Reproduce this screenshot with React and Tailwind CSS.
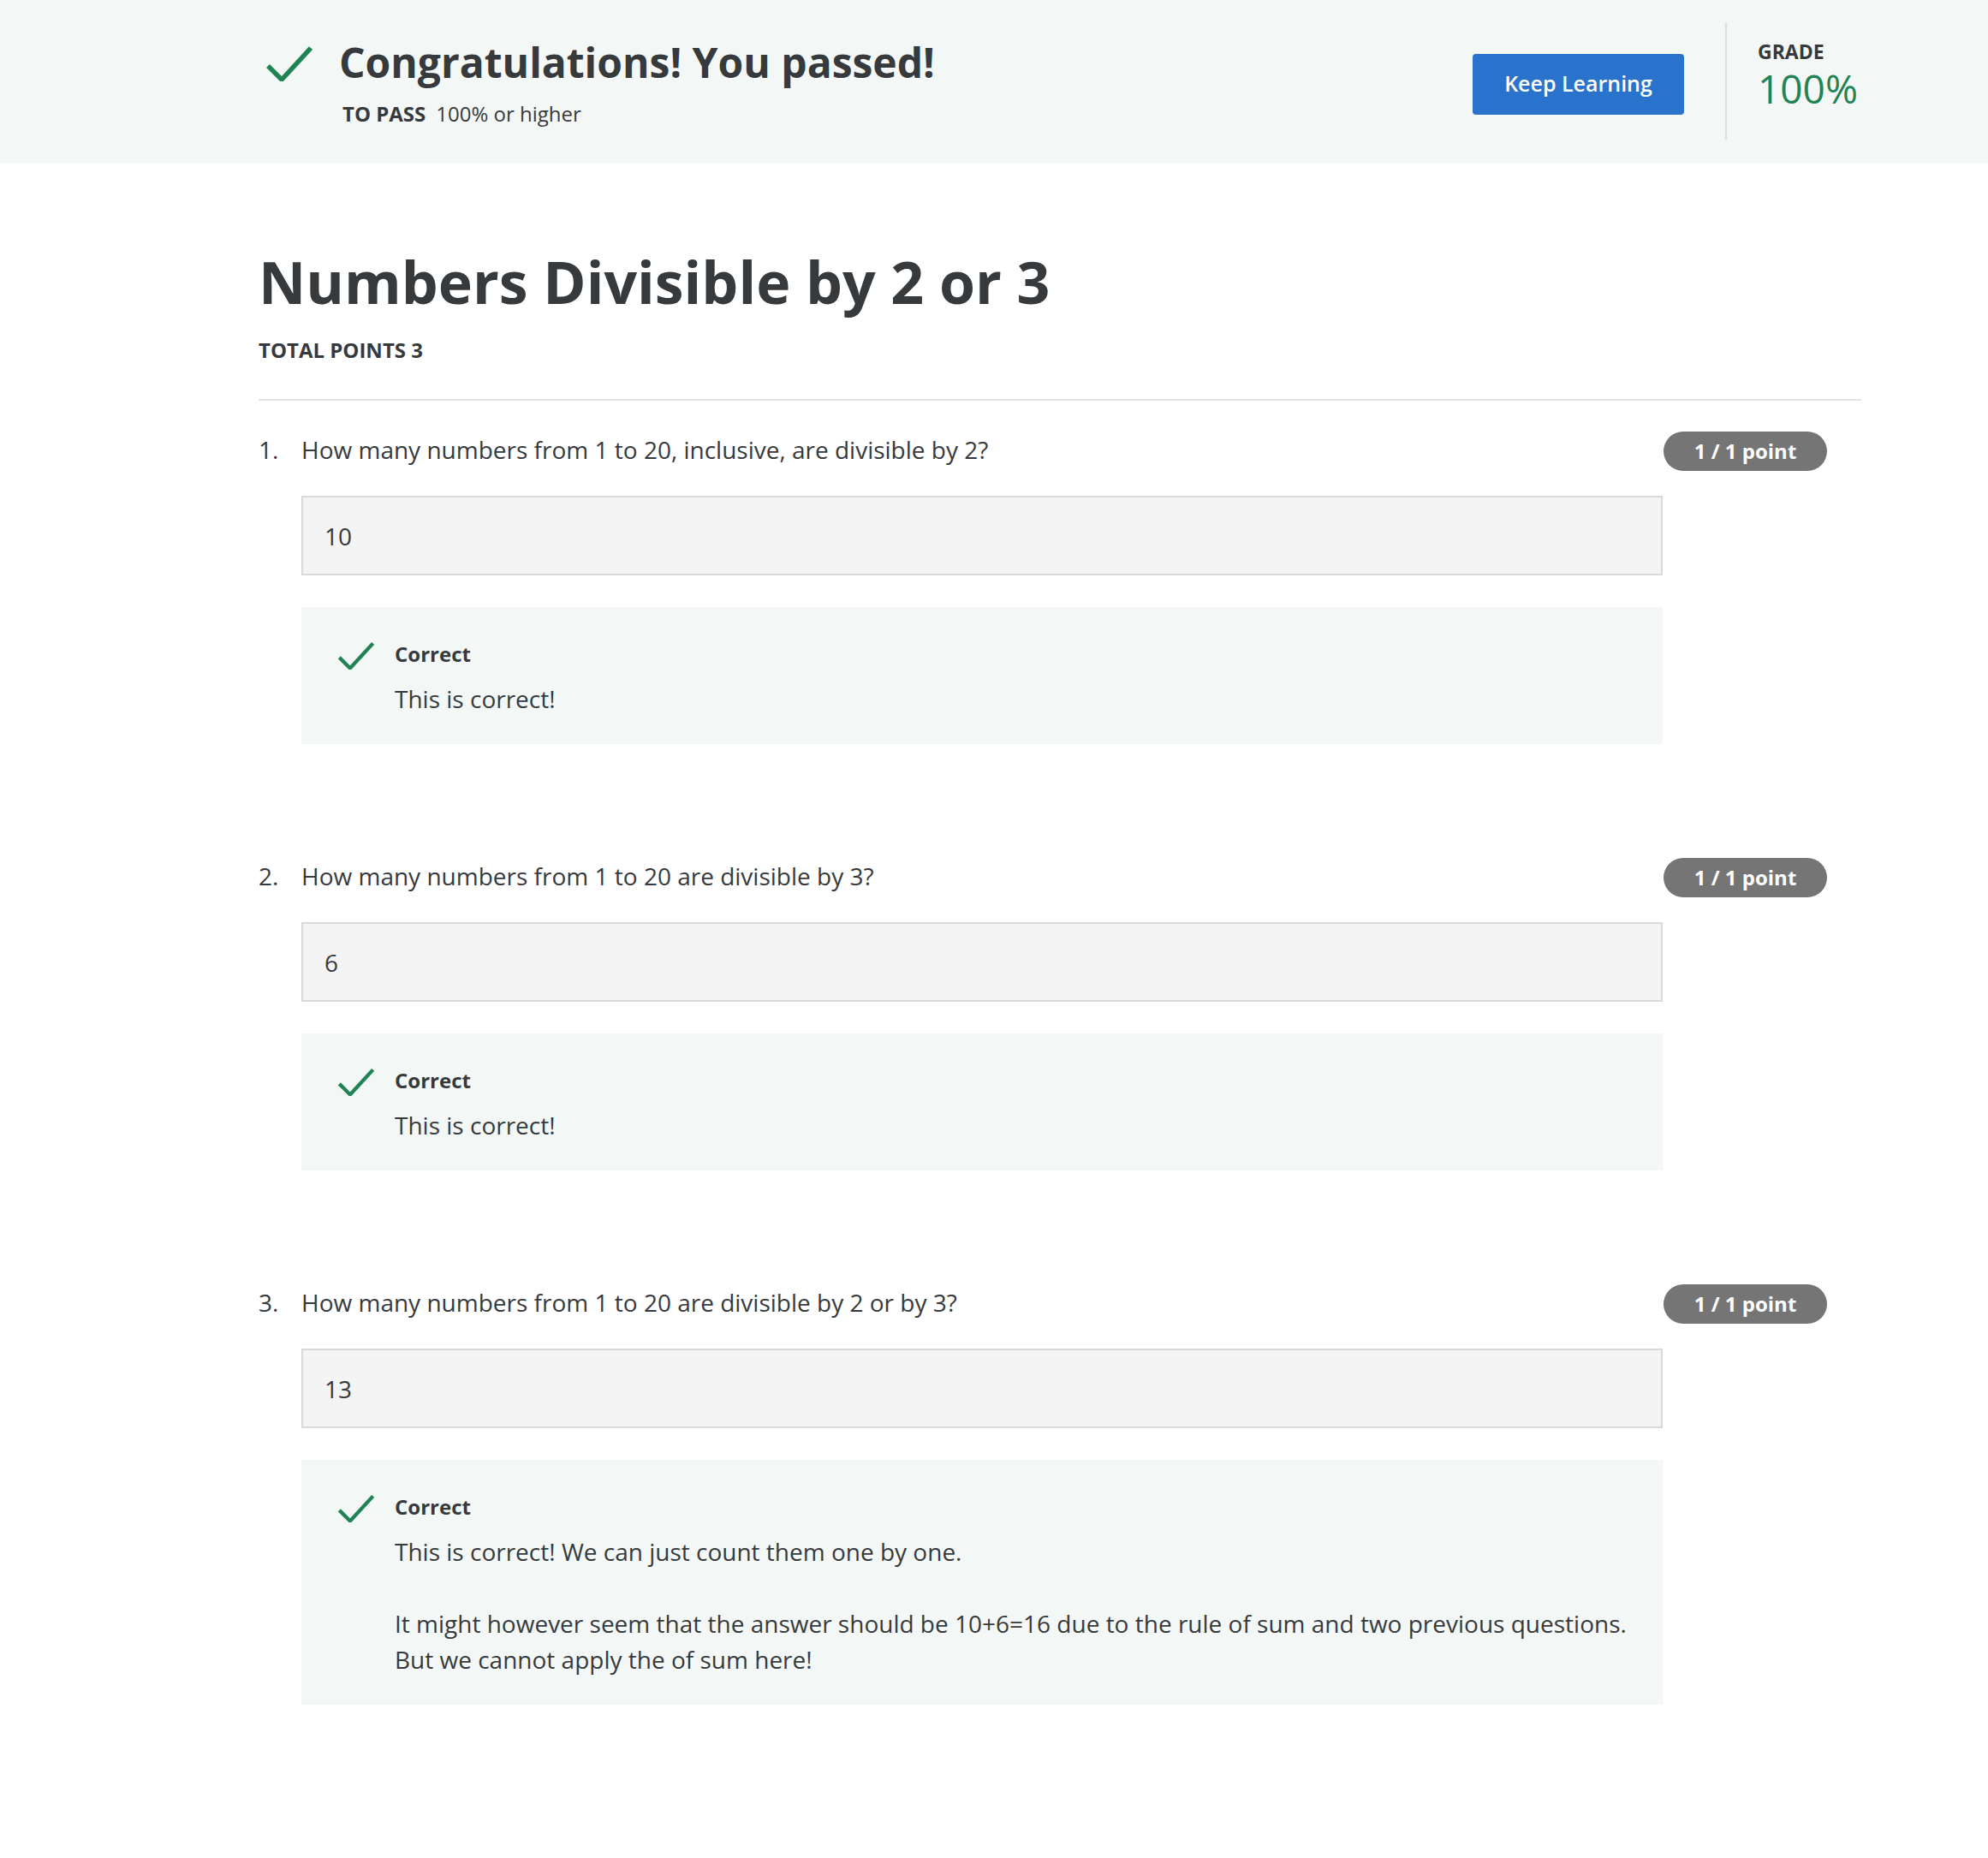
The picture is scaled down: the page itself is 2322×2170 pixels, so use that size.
import React from 'react';

const questions = [
  {
    id: 1,
    text: 'How many numbers from 1 to 20, inclusive, are divisible by 2?',
    answer: '10',
    feedback: ['This is correct!'],
  },
  {
    id: 2,
    text: 'How many numbers from 1 to 20 are divisible by 3?',
    answer: '6',
    feedback: ['This is correct!'],
  },
  {
    id: 3,
    text: 'How many numbers from 1 to 20 are divisible by 2 or by 3?',
    answer: '13',
    feedback: [
      'This is correct! We can just count them one by one.',
      '',
      'It might however seem that the answer should be 10+6=16 due to the rule of sum and two previous questions.',
      'But we cannot apply the of sum here!',
    ],
  },
];

const Check = ({ className, strokeWidth = 5 }) => (
  <svg viewBox="0 0 54 42" className={className} fill="none">
    <polyline
      points="2,24 18,40 52,3"
      stroke="#1f8354"
      strokeWidth={strokeWidth}
      strokeLinecap="butt"
      strokeLinejoin="miter"
    />
  </svg>
);

const Question = ({ q }) => (
  <div className="mb-[133px]">
    {/* Prompt row */}
    <div className="flex items-start justify-between">
      <div className="flex text-[28px] leading-[42px]">
        <span className="w-[50px]">{q.id}.</span>
        <p>{q.text}</p>
      </div>
      <span className="mr-[40px] flex h-[46px] w-[191px] items-center justify-center rounded-full bg-[#757575] text-[24px] font-bold text-white">
        1 / 1 point
      </span>
    </div>

    {/* Answer */}
    <div className="ml-[50px] mt-[29px] flex h-[93px] w-[1590px] items-center border-2 border-[#d9d9d9] bg-[#f4f4f4] px-[25px] text-[28px]">
      {q.answer}
    </div>

    {/* Feedback */}
    <div className="ml-[50px] mt-[37px] flex w-[1590px] bg-[#f3f8f6] pb-[32px] pl-[42px] pt-[37px]">
      <Check className="mt-[3px] h-[33px] w-[44px] shrink-0" strokeWidth={5.5} />
      <div className="ml-[23px]">
        <div className="text-[24px] font-bold leading-[36px]">Correct</div>
        <div className="mt-[13px] text-[28px] leading-[42px]">
          {q.feedback.map((line, i) => (
            <div key={i} className="h-[42px] whitespace-nowrap">{line}</div>
          ))}
        </div>
      </div>
    </div>
  </div>
);

export default function App() {
  return (
    <div className="min-h-screen bg-white text-[#373a3c]" style={{ fontFamily: '"Open Sans", "Liberation Sans", sans-serif' }}>
      {/* Header */}
      <header className="bg-[#f3f8f6]">
        <div className="ml-[302px] flex h-[190px] w-[1872px] items-center justify-between">
          <div className="flex items-start pt-[4px]">
            <Check className="ml-[9px] mt-[8px] h-[42px] w-[54px]" strokeWidth={5.5} />
            <div className="ml-[31px]">
              <h2 className="text-[48px] font-bold leading-[56px]">Congratulations! You passed!</h2>
              <div className="ml-[4px] mt-[15px] flex text-[24px] leading-[33px]">
                <span className="font-bold">TO PASS</span>
                <span className="ml-[12px]">100% or higher</span>
              </div>
            </div>
          </div>

          <div className="flex items-center">
            <button className="mt-[6px] h-[71px] w-[247px] rounded-[4px] bg-[#2a73cc] text-[25px] font-semibold text-white">
              Keep Learning
            </button>
            <div className="ml-[48px] h-[136px] w-[2px] bg-[#dcdcdc]" />
            <div className="ml-[36px] mb-[14px] w-[121px]">
              <div className="text-[23px] font-bold leading-[28px]">GRADE</div>
              <div className="mt-[2px] text-[46px] leading-[55px] text-[#1f8354]">100%</div>
            </div>
          </div>
        </div>
      </header>

      {/* Main */}
      <main className="ml-[302px] w-[1872px] pt-[97px]">
        <h1 className="text-[68px] font-bold leading-[84px]">Numbers Divisible by 2 or 3</h1>
        <div className="mt-[21px] text-[24px] font-bold leading-[33px]">TOTAL POINTS 3</div>
        <div className="mt-[41px] h-[2px] bg-[#e1e1e1]" />

        <div className="pt-[36px]">
          {questions.map((q) => (
            <Question key={q.id} q={q} />
          ))}
        </div>
      </main>
    </div>
  );
}
